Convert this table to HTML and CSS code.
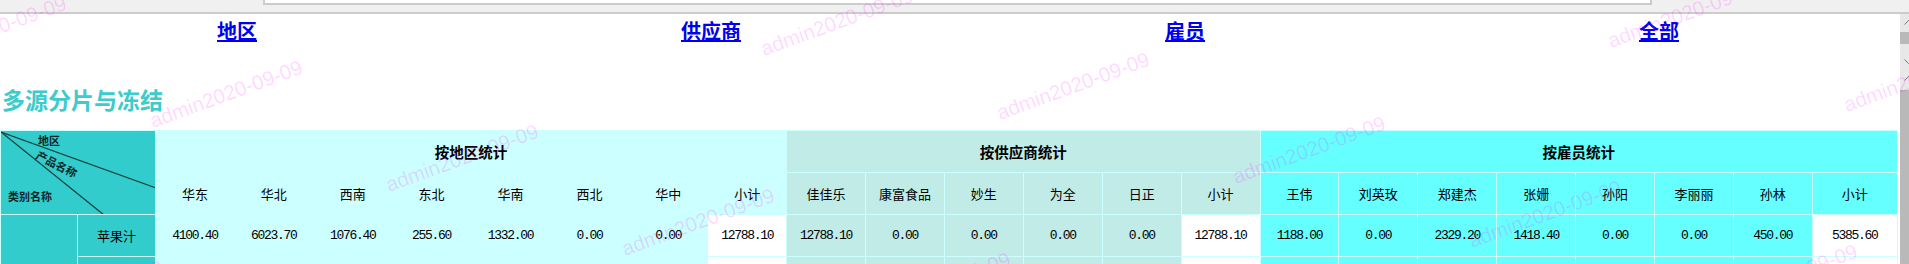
FILE: index.html
```html
<!DOCTYPE html>
<html lang="zh-CN">
<head>
<meta charset="utf-8">
<title>多源分片与冻结</title>
<link rel="stylesheet" href="styles.css">
</head>
<body>
<div class="topbar"><div class="addr"></div></div>

<div class="frame nav-frame">
  <div class="frame-body">
    <nav class="nav">
      <div class="nav-cell"><a href="#">地区</a></div>
      <div class="nav-cell"><a href="#">供应商</a></div>
      <div class="nav-cell"><a href="#">雇员</a></div>
      <div class="nav-cell"><a href="#">全部</a></div>
    </nav>
  </div>
  <div class="scrollbar">
    <div class="sb-btn"><svg class="chev" viewBox="0 0 17 17"><polyline points="4.5,10.5 8.5,6.5 12.5,10.5"/></svg></div>
    <div class="sb-track nav-track"><div class="sb-thumb nav-thumb"></div></div>
    <div class="sb-btn"><svg class="chev" viewBox="0 0 17 17"><polyline points="4.5,6.5 8.5,10.5 12.5,6.5"/></svg></div>
  </div>
</div>

<div class="frame main-frame">
  <div class="frame-body main-body">
    <h1 class="title">多源分片与冻结</h1>
    <table class="grid">
      <colgroup>
        <col class="c77"><col class="c78">
        <col class="cn"><col class="cn"><col class="cn"><col class="cn"><col class="cn"><col class="cn"><col class="cn"><col class="cn">
        <col class="cn"><col class="cn"><col class="cn"><col class="cn"><col class="cn"><col class="cn">
        <col class="cn"><col class="cn"><col class="cn"><col class="cn"><col class="cn"><col class="cn"><col class="cn"><col class="clast">
      </colgroup>
      <tr>
        <td class="diag" rowspan="2" colspan="2">
          <svg class="diag-svg" viewBox="0 0 155 83">
            <line x1="0" y1="1" x2="155" y2="57"/>
            <line x1="0" y1="1" x2="103" y2="84"/>
            <text x="37" y="14">地区</text>
            <text x="34" y="27" transform="rotate(27 34 27)">产品名称</text>
            <text x="7" y="70">类别名称</text>
          </svg>
        </td>
        <td class="r grp" colspan="8">按地区统计</td>
        <td class="s grp" colspan="6">按供应商统计</td>
        <td class="e grp" colspan="8">按雇员统计</td>
      </tr>
      <tr>
        <td class="r">华东</td><td class="r">华北</td><td class="r">西南</td><td class="r">东北</td>
        <td class="r">华南</td><td class="r">西北</td><td class="r">华中</td><td class="r">小计</td>
        <td class="s">佳佳乐</td><td class="s">康富食品</td><td class="s">妙生</td><td class="s">为全</td>
        <td class="s">日正</td><td class="s">小计</td>
        <td class="e">王伟</td><td class="e">刘英玫</td><td class="e">郑建杰</td><td class="e">张姗</td>
        <td class="e">孙阳</td><td class="e">李丽丽</td><td class="e">孙林</td><td class="e">小计</td>
      </tr>
      <tr>
        <td class="t" rowspan="2"></td>
        <td class="t">苹果汁</td>
        <td class="r num">4100.40</td><td class="r num">6023.70</td><td class="r num">1076.40</td><td class="r num">255.60</td>
        <td class="r num">1332.00</td><td class="r num">0.00</td><td class="r num">0.00</td><td class="w num">12788.10</td>
        <td class="s num">12788.10</td><td class="s num">0.00</td><td class="s num">0.00</td><td class="s num">0.00</td>
        <td class="s num">0.00</td><td class="w num">12788.10</td>
        <td class="e num">1188.00</td><td class="e num">0.00</td><td class="e num">2329.20</td><td class="e num">1418.40</td>
        <td class="e num">0.00</td><td class="e num">0.00</td><td class="e num">450.00</td><td class="w num">5385.60</td>
      </tr>
      <tr>
        <td class="t"></td>
        <td class="r"></td><td class="r"></td><td class="r"></td><td class="r"></td>
        <td class="r"></td><td class="r"></td><td class="r"></td><td class="w"></td>
        <td class="s"></td><td class="s"></td><td class="s"></td><td class="s"></td>
        <td class="s"></td><td class="w"></td>
        <td class="e"></td><td class="e"></td><td class="e"></td><td class="e"></td>
        <td class="e"></td><td class="e"></td><td class="e"></td><td class="w"></td>
      </tr>
    </table>
  </div>
  <div class="scrollbar">
    <div class="sb-btn"><svg class="chev" viewBox="0 0 17 17"><polyline points="4.5,10.5 8.5,6.5 12.5,10.5"/></svg></div>
    <div class="sb-track main-track"><div class="sb-thumb main-thumb"></div></div>
  </div>
</div>

<svg class="wm" viewBox="0 0 1909 264">
  <text x="-83" y="64" transform="rotate(-20 -83 64)">admin2020-09-09</text>
  <text x="153" y="128" transform="rotate(-20 153 128)">admin2020-09-09</text>
  <text x="389" y="192" transform="rotate(-20 389 192)">admin2020-09-09</text>
  <text x="625" y="256" transform="rotate(-20 625 256)">admin2020-09-09</text>
  <text x="861" y="320" transform="rotate(-20 861 320)">admin2020-09-09</text>
  <text x="14" y="328" transform="rotate(-20 14 328)">admin2020-09-09</text>
  <text x="764" y="56" transform="rotate(-20 764 56)">admin2020-09-09</text>
  <text x="1000" y="120" transform="rotate(-20 1000 120)">admin2020-09-09</text>
  <text x="1236" y="184" transform="rotate(-20 1236 184)">admin2020-09-09</text>
  <text x="1472" y="248" transform="rotate(-20 1472 248)">admin2020-09-09</text>
  <text x="1708" y="312" transform="rotate(-20 1708 312)">admin2020-09-09</text>
  <text x="1611" y="48" transform="rotate(-20 1611 48)">admin2020-09-09</text>
  <text x="1847" y="112" transform="rotate(-20 1847 112)">admin2020-09-09</text>
</svg>
</body>
</html>
```

FILE: styles.css
```css
html, body {
  margin: 0;
  padding: 0;
}
body {
  width: 1909px;
  height: 264px;
  overflow: hidden;
  position: relative;
  background: #ffffff;
  font-family: "Noto Sans CJK SC", "Liberation Sans", sans-serif;
}

/* browser/address strip */
.topbar {
  height: 12px;
  background: #f0f0f0;
  border-bottom: 2px solid #cccccc;
}
.addr {
  margin-left: 263px;
  width: 1385px;
  height: 3px;
  background: #ffffff;
  border: 2px solid #cccccc;
  border-top: none;
}

/* frames */
.frame {
  display: flex;
  width: 1917px;
  overflow: hidden;
}
.nav-frame { height: 56px; }
.main-frame { height: 194px; }
.frame-body {
  width: 1900px;
  flex: 0 0 1900px;
  overflow: hidden;
}

/* scrollbars */
.scrollbar {
  flex: 0 0 17px;
  width: 17px;
  display: flex;
  flex-direction: column;
  background: #e8e8e8;
}
.sb-btn {
  height: 17px;
  flex: 0 0 17px;
}
.chev {
  display: block;
  width: 17px;
  height: 17px;
}
.chev polyline {
  fill: none;
  stroke: #7a7a7a;
  stroke-width: 1;
}
.sb-track { flex: 1 1 auto; }
.sb-thumb { background: #b9b9b9; }
.nav-thumb { margin-top: 1px; height: 12px; }
.main-thumb { margin-top: 3px; height: 300px; }

/* nav */
.nav {
  display: grid;
  grid-template-columns: repeat(4, 474px);
  padding-top: 7px;
}
.nav-cell {
  text-align: center;
  line-height: 20px;
}
.nav-cell a {
  font-size: 20px;
  font-weight: 700;
  color: #0000ee;
  text-decoration: underline;
}

/* main */
.title {
  margin: 18px 0 19px 0;
  padding-left: 2px;
  font-size: 23px;
  line-height: 23px;
  font-weight: 700;
  color: #3ccccc;
}

.grid {
  border-collapse: collapse;
  table-layout: fixed;
  width: 1897px;
  font-size: 13px;
  color: #000000;
}
.c77 { width: 77px; }
.c78 { width: 78px; }
.cn { width: 78.9px; }
.clast { width: 85px; }

.grid td {
  border: 1px solid #ccffff;
  height: 41px;
  padding: 0;
  text-align: center;
  vertical-align: middle;
  white-space: nowrap;
  overflow: hidden;
}
.r { background: #ccffff; }
.s { background: #c1ebe7; }
.e { background: #66ffff; }
.t { background: #33cccc; }
.w { background: #ffffff; }

.grp {
  font-size: 14.5px;
  font-weight: 700;
}
.num {
  font-family: "Liberation Mono", monospace;
  font-size: 13px;
  letter-spacing: -1.3px;
}

.diag {
  background: #33cccc;
  position: relative;
}
.diag-svg {
  display: block;
  width: 155px;
  height: 83px;
}
.diag-svg line {
  stroke: #1c4343;
  stroke-width: 1.3;
}
.diag-svg text {
  font-family: "Noto Sans CJK SC", sans-serif;
  font-size: 11px;
  font-weight: 700;
  fill: #0f2626;
}

/* watermark overlay */
.wm {
  position: absolute;
  left: 0;
  top: 0;
  width: 1909px;
  height: 264px;
  pointer-events: none;
}
.wm text {
  font-family: "Liberation Sans", sans-serif;
  font-size: 20.5px;
  fill: #ff00ff;
  fill-opacity: 0.16;
}
```
